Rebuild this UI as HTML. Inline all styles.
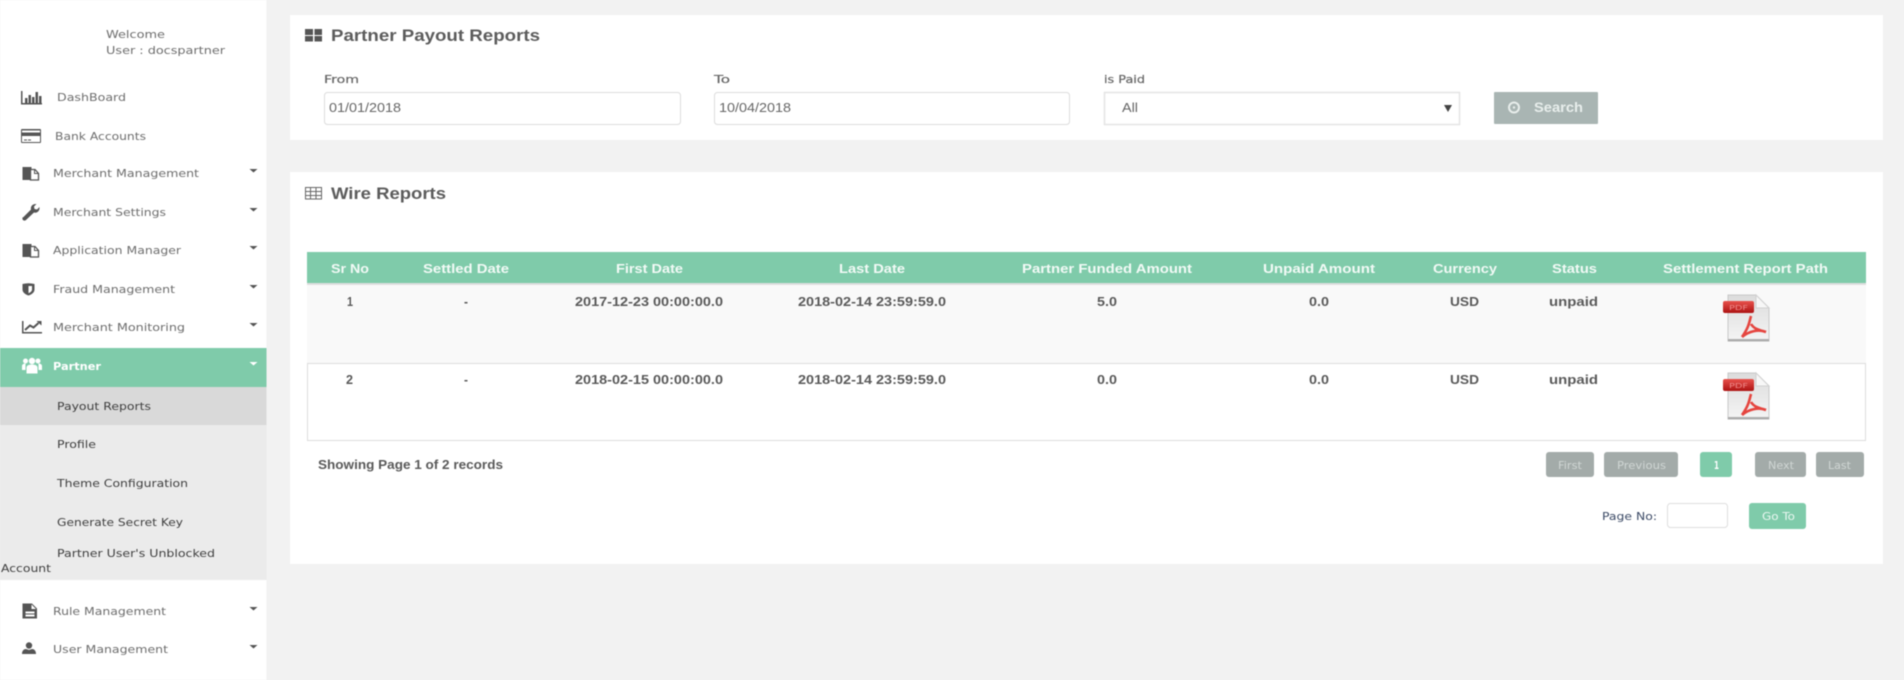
<!DOCTYPE html>
<html><head><meta charset="utf-8"><title>Partner Payout Reports</title>
<style>
html,body{margin:0;padding:0;width:1904px;height:680px;overflow:hidden;background:#f2f2f2}
svg{display:block;filter:blur(.5px)}
text{font-family:"DejaVu Sans","Liberation Sans",sans-serif;font-size:11px;fill:#5f5f5f;white-space:pre}
.n{fill:#6e6e6e}
.s{fill:#3f3f3f;font-size:11px}
.b{font-family:"Liberation Sans",sans-serif;font-weight:700;font-size:13px;fill:#5a5a5a}
.h{font-family:"Liberation Sans",sans-serif;font-weight:700;font-size:13px;fill:#f2faf6}
.t{font-family:"Liberation Sans",sans-serif;font-weight:700;font-size:17px;fill:#5c5c5c}
.l{font-family:"DejaVu Sans",sans-serif;font-size:11px;fill:#666;stroke:#666;stroke-width:.2px}
.a{font-family:"Liberation Sans",sans-serif;font-size:13px;fill:#666}
.p{font-size:11px;fill:#c4cbc9}
.w{fill:#fff}
</style></head><body>
<svg width="1904" height="680" viewBox="0 0 1904 680" xmlns="http://www.w3.org/2000/svg">
<defs>
<linearGradient id="pg" x1="0" y1="0" x2="0" y2="1"><stop offset="0" stop-color="#dcdcdc"/><stop offset="1" stop-color="#f4f4f4"/></linearGradient>
<linearGradient id="rd" x1="0" y1="0" x2="0" y2="1"><stop offset="0" stop-color="#e8524c"/><stop offset="1" stop-color="#ad1212"/></linearGradient>
<g id="pdf">
<path d="M5 0H33L46 13V46H5Z" fill="url(#pg)" stroke="#c8c8c8"/>
<path d="M33 0V13H46Z" fill="#f7f7f7" stroke="#d0d0d0"/>
<rect x="0" y="6" width="31" height="12" rx="2" fill="url(#rd)"/>
<text x="6" y="15" style="font-size:7px;fill:#e88" textLength="19" lengthAdjust="spacingAndGlyphs">PDF</text>
<path d="M28 21C26 28 26 32 19 42M28 29C31 34 36 35 43 37M19 42C26 36 36 34 43 37" fill="none" stroke="#e5453f" stroke-width="2.600"/>
<rect x="5" y="44" width="41" height="2.500" fill="#adadad"/>
</g>
<path id="c" d="M0 0H8L4 3.500Z"/>
<g id="doc"><path d="M0 0H9V13H0Z" fill="#555"/><path d="M8 2.500H12.500L16 6.500V13H8Z" fill="#fff" stroke="#555" stroke-width="1.300"/><path d="M12 2.500V6.500H16" fill="none" stroke="#555"/></g>
</defs>

<!-- sidebar -->
<rect x="0" y="0" width="266.500" height="680" fill="#fff"/>
<text x="106" y="38" class="n" textLength="59" lengthAdjust="spacingAndGlyphs">Welcome</text>
<text x="106" y="54" class="n" textLength="119" lengthAdjust="spacingAndGlyphs">User : docspartner</text>

<rect x="0" y="348" width="266.500" height="39" fill="#7fcbaa"/>
<rect x="0" y="387" width="266.500" height="193" fill="#ebebeb"/>
<rect x="0" y="387" width="266.500" height="38" fill="#d9d9d9"/>

<text x="57" y="101" class="n" textLength="69" lengthAdjust="spacingAndGlyphs">DashBoard</text>
<text x="55" y="140" class="n" textLength="91" lengthAdjust="spacingAndGlyphs">Bank Accounts</text>
<text x="53" y="177" class="n" textLength="146" lengthAdjust="spacingAndGlyphs">Merchant Management</text>
<text x="53" y="216" class="n" textLength="113" lengthAdjust="spacingAndGlyphs">Merchant Settings</text>
<text x="53" y="254" class="n" textLength="128" lengthAdjust="spacingAndGlyphs">Application Manager</text>
<text x="53" y="293" class="n" textLength="122" lengthAdjust="spacingAndGlyphs">Fraud Management</text>
<text x="53" y="331" class="n" textLength="132" lengthAdjust="spacingAndGlyphs">Merchant Monitoring</text>
<text x="53" y="370" class="w" style="font-weight:700;fill:#fff" textLength="48" lengthAdjust="spacingAndGlyphs">Partner</text>
<text x="57" y="410" class="s" textLength="94" lengthAdjust="spacingAndGlyphs">Payout Reports</text>
<text x="57" y="448" class="s" textLength="39" lengthAdjust="spacingAndGlyphs">Profile</text>
<text x="57" y="487" class="s" textLength="131" lengthAdjust="spacingAndGlyphs">Theme Configuration</text>
<text x="57" y="526" class="s" textLength="126" lengthAdjust="spacingAndGlyphs">Generate Secret Key</text>
<text x="57" y="557" class="s" textLength="158" lengthAdjust="spacingAndGlyphs">Partner User's Unblocked</text>
<text x="1" y="572" class="s" textLength="50" lengthAdjust="spacingAndGlyphs">Account</text>
<text x="53" y="615" class="n" textLength="113" lengthAdjust="spacingAndGlyphs">Rule Management</text>
<text x="53" y="653" class="n" textLength="115" lengthAdjust="spacingAndGlyphs">User Management</text>

<!-- carets -->
<g fill="#555">
<use href="#c" x="249.500" y="169"/><use href="#c" x="249.500" y="208"/><use href="#c" x="249.500" y="246"/>
<use href="#c" x="249.500" y="285"/><use href="#c" x="249.500" y="323"/>
<use href="#c" x="249.500" y="607"/><use href="#c" x="249.500" y="645"/>
</g>
<use href="#c" x="249.500" y="362" fill="#fff"/>

<!-- nav icons -->
<g fill="#555">
<path d="M21 91h1.500v12H42v1.500H21Z"/><rect x="25" y="98" width="2.500" height="5"/><rect x="28.500" y="95" width="2.500" height="8"/><rect x="32" y="97" width="2.500" height="6"/><rect x="35.500" y="92" width="2.500" height="11"/><rect x="39" y="96" width="2.500" height="7"/>
<path fill-rule="evenodd" d="M22 129h18a1 1 0 0 1 1 1v12a1 1 0 0 1-1 1H22a1 1 0 0 1-1-1v-12a1 1 0 0 1 1-1Zm0 1.500v2h18v-2Zm0 5.500v6h18v-6Z"/>
<rect x="24" y="139.500" width="3" height="1"/><rect x="28" y="139.500" width="3" height="1"/>
<use href="#doc" x="22.500" y="167"/><use href="#doc" x="22.500" y="244"/>
<path d="M23 217.500l8-8c-.8-3 1.500-6 5.500-5.500l-2.500 2.500 .5 2.500 2.500 .5 2.500-2.500c.5 4-2.500 6.500-5.500 5.500l-8 7.500a2 2 0 0 1-3-3Z"/>
<path d="M22.500 284c4-1 8-1 12 0v5.500c0 3-3 5-6 6-3-1-6-3-6-6Z"/><path d="M28.500 286h3.500v3.500c0 1.500-1.500 3-3.500 3.700Z" fill="#fff"/>
<path d="M22 321h1.500v11H42v1.500H22Z"/><path d="M25 330l5-4.500 3.500 2 5-4.500" fill="none" stroke="#555" stroke-width="2"/><path d="M36.500 321h5v4.500Z"/>
<path fill-rule="evenodd" d="M22.500 603.500h9.500l5 5v10H22.500Zm3 8v2h9v-2Zm0 3v2h9v-2Zm6-10v4.500h4.500Z"/>
<circle cx="29" cy="645.500" r="3.200"/><path d="M22 654c0-3.500 2-5 4-5l3 1 3-1c2 0 4 1.500 4 5Z"/>
</g>
<g fill="#fff">
<circle cx="32" cy="361" r="3.200"/><circle cx="25.500" cy="361" r="2.500"/><circle cx="38" cy="361" r="2.500"/>
<path d="M26.500 373.500v-6c0-2 2.500-3 5.500-3s5.500 1 5.500 3v6Z"/><path d="M22 370v-4c0-1.500 1.500-2.500 3.500-2.500v6.500ZM42 370v-4c0-1.500-1.500-2.500-3.500-2.500v6.500Z"/>
</g>

<!-- panels -->
<rect x="290" y="15" width="1593" height="125" fill="#fff"/>
<rect x="290" y="172" width="1593" height="392" fill="#fff"/>

<!-- panel 1 -->
<g fill="#555"><rect x="305" y="29" width="8" height="6"/><rect x="314.500" y="29" width="7.500" height="6"/><rect x="305" y="36" width="8" height="5.500"/><rect x="314.500" y="36" width="7.500" height="5.500"/></g>
<text x="331" y="41" class="t" textLength="209" lengthAdjust="spacingAndGlyphs">Partner Payout Reports</text>
<text x="324" y="83" class="l" textLength="35" lengthAdjust="spacingAndGlyphs">From</text>
<text x="714" y="83" class="l" textLength="16" lengthAdjust="spacingAndGlyphs">To</text>
<text x="1104" y="83" class="l" textLength="41" lengthAdjust="spacingAndGlyphs">is Paid</text>
<rect x="324.500" y="92.500" width="356" height="32" rx="3" fill="#fff" stroke="#dcdcdc"/>
<rect x="714.500" y="92.500" width="355" height="32" rx="3" fill="#fff" stroke="#dcdcdc"/>
<rect x="1104.500" y="92.500" width="355" height="32" fill="#fff" stroke="#e4e4e4" stroke-width="1.500"/>
<text x="329" y="112" class="a" textLength="72" lengthAdjust="spacingAndGlyphs">01/01/2018</text>
<text x="719" y="112" class="a" textLength="72" lengthAdjust="spacingAndGlyphs">10/04/2018</text>
<text x="1122" y="112" class="a" textLength="16" lengthAdjust="spacingAndGlyphs">All</text>
<path d="M1444 105h8l-4 7Z" fill="#444"/>
<rect x="1494" y="92" width="104" height="32" rx="1" fill="#a9b5b3"/>
<circle cx="1514" cy="107.500" r="5" fill="none" stroke="#e8eeec" stroke-width="2"/><circle cx="1514" cy="107.500" r="1.200" fill="#e8eeec"/>
<text x="1534" y="112" style="font-family:'Liberation Sans',sans-serif;font-weight:700;font-size:14px;fill:#e8eeec" textLength="49" lengthAdjust="spacingAndGlyphs">Search</text>

<!-- panel 2 -->
<g fill="none" stroke="#666" stroke-width="1"><rect x="305.500" y="187.500" width="16" height="11.500"/><path d="M305 191.500h17M305 195.500h17M310.500 187v12M316 187v12"/></g>
<text x="331" y="199" class="t" textLength="115" lengthAdjust="spacingAndGlyphs">Wire Reports</text>

<rect x="307" y="252" width="1559" height="31" fill="#7fcbaa"/>
<rect x="307" y="283" width="1559" height="2" fill="#dedede"/>
<rect x="307" y="285" width="1559" height="78" fill="#f9f9f9"/>
<rect x="307.500" y="363.500" width="1558" height="77" fill="#fff" stroke="#dcdcdc"/>

<text x="331" y="273" class="h" textLength="38" lengthAdjust="spacingAndGlyphs">Sr No</text>
<text x="423" y="273" class="h" textLength="86" lengthAdjust="spacingAndGlyphs">Settled Date</text>
<text x="616" y="273" class="h" textLength="67" lengthAdjust="spacingAndGlyphs">First Date</text>
<text x="839" y="273" class="h" textLength="66" lengthAdjust="spacingAndGlyphs">Last Date</text>
<text x="1022" y="273" class="h" textLength="170" lengthAdjust="spacingAndGlyphs">Partner Funded Amount</text>
<text x="1263" y="273" class="h" textLength="112" lengthAdjust="spacingAndGlyphs">Unpaid Amount</text>
<text x="1433" y="273" class="h" textLength="64" lengthAdjust="spacingAndGlyphs">Currency</text>
<text x="1552" y="273" class="h" textLength="45" lengthAdjust="spacingAndGlyphs">Status</text>
<text x="1663" y="273" class="h" textLength="165" lengthAdjust="spacingAndGlyphs">Settlement Report Path</text>

<text x="347" y="306" class="b" textLength="6" lengthAdjust="spacingAndGlyphs">1</text>
<text x="464" y="306" class="b" textLength="4" lengthAdjust="spacingAndGlyphs">-</text>
<text x="575" y="306" class="b" textLength="148" lengthAdjust="spacingAndGlyphs">2017-12-23 00:00:00.0</text>
<text x="798" y="306" class="b" textLength="148" lengthAdjust="spacingAndGlyphs">2018-02-14 23:59:59.0</text>
<text x="1097" y="306" class="b" textLength="20" lengthAdjust="spacingAndGlyphs">5.0</text>
<text x="1309" y="306" class="b" textLength="20" lengthAdjust="spacingAndGlyphs">0.0</text>
<text x="1450" y="306" class="b" textLength="29" lengthAdjust="spacingAndGlyphs">USD</text>
<text x="1549" y="306" class="b" textLength="49" lengthAdjust="spacingAndGlyphs">unpaid</text>
<use href="#pdf" x="1723" y="295"/>

<text x="346" y="384" class="b" textLength="7" lengthAdjust="spacingAndGlyphs">2</text>
<text x="464" y="384" class="b" textLength="4" lengthAdjust="spacingAndGlyphs">-</text>
<text x="575" y="384" class="b" textLength="148" lengthAdjust="spacingAndGlyphs">2018-02-15 00:00:00.0</text>
<text x="798" y="384" class="b" textLength="148" lengthAdjust="spacingAndGlyphs">2018-02-14 23:59:59.0</text>
<text x="1097" y="384" class="b" textLength="20" lengthAdjust="spacingAndGlyphs">0.0</text>
<text x="1309" y="384" class="b" textLength="20" lengthAdjust="spacingAndGlyphs">0.0</text>
<text x="1450" y="384" class="b" textLength="29" lengthAdjust="spacingAndGlyphs">USD</text>
<text x="1549" y="384" class="b" textLength="49" lengthAdjust="spacingAndGlyphs">unpaid</text>
<use href="#pdf" x="1723" y="373"/>

<text x="318" y="469" class="b" textLength="185" lengthAdjust="spacingAndGlyphs">Showing Page 1 of 2 records</text>

<g fill="#a3aba9">
<rect x="1546" y="452" width="48" height="25" rx="3"/>
<rect x="1604" y="452" width="74" height="25" rx="3"/>
<rect x="1755" y="452" width="51" height="25" rx="3"/>
<rect x="1816" y="452" width="48" height="25" rx="3"/>
</g>
<rect x="1700" y="452" width="32" height="25" rx="3" fill="#7fcbaa"/>
<text x="1558" y="469" class="p" textLength="24" lengthAdjust="spacingAndGlyphs" style="fill:#d0d6d4">First</text>
<text x="1617" y="469" class="p" textLength="49" lengthAdjust="spacingAndGlyphs" style="fill:#d0d6d4">Previous</text>
<text x="1714" y="469" style="font-weight:700;fill:#fff" textLength="5" lengthAdjust="spacingAndGlyphs">1</text>
<text x="1768" y="469" class="p" textLength="26" lengthAdjust="spacingAndGlyphs" style="fill:#d0d6d4">Next</text>
<text x="1828" y="469" class="p" textLength="23" lengthAdjust="spacingAndGlyphs" style="fill:#d0d6d4">Last</text>

<text x="1602" y="520" style="fill:#3c4a66" textLength="55" lengthAdjust="spacingAndGlyphs">Page No:</text>
<rect x="1667.500" y="503.500" width="60" height="24" rx="3" fill="#fff" stroke="#dedede"/>
<rect x="1749" y="503" width="57" height="26" rx="3" fill="#7fcbaa"/>
<text x="1762" y="520" style="fill:#eaf7f1" textLength="33" lengthAdjust="spacingAndGlyphs">Go To</text>
</svg>
</body></html>
